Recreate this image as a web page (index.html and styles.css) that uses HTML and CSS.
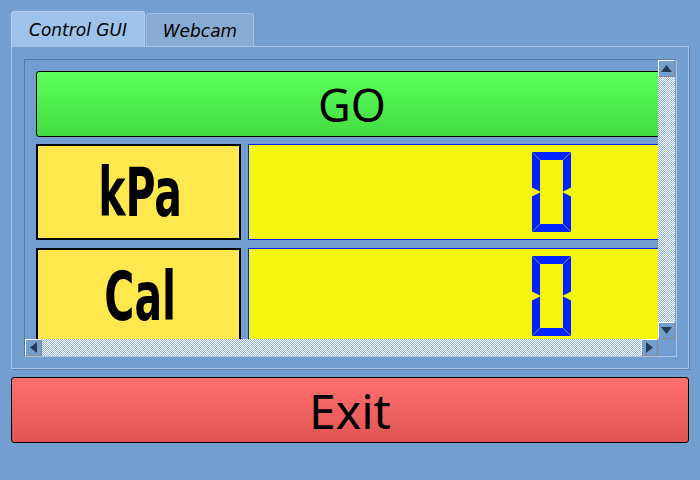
FILE: index.html
```html
<!DOCTYPE html>
<html>
<head>
<meta charset="utf-8">
<link rel="stylesheet" href="styles.css">
</head>
<body>
<div class="app">
  <div class="tabs">
    <div class="tab active">Control GUI</div>
    <div class="tab">Webcam</div>
  </div>
  <div class="pane">
    <div class="scroll">
      <div class="viewport">
        <div class="content">
          <div class="go">GO</div>
          <div class="row">
            <div class="label"><span class="ltext">kPa</span></div>
            <div class="value">
              <svg class="digit" width="39" height="80" viewBox="0 0 39 80">
                <g fill="#0022ff">
                  <polygon points="0,0 39,0 31,8 8,8"/>
                  <polygon points="0,0 8,8 8,39.5 0,35.5"/>
                  <polygon points="39,0 31,8 31,39.5 39,35.5"/>
                  <polygon points="0,44.5 8,40.5 8,72 0,80"/>
                  <polygon points="39,44.5 31,40.5 31,72 39,80"/>
                  <polygon points="0,80 8,72 31,72 39,80"/>
                </g>
                <g stroke="#7d8a6a" stroke-width="1">
                  <line x1="0.5" y1="0.5" x2="8" y2="8"/>
                  <line x1="38.5" y1="0.5" x2="31" y2="8"/>
                  <line x1="0.5" y1="79.5" x2="8" y2="72"/>
                  <line x1="38.5" y1="79.5" x2="31" y2="72"/>
                </g>
              </svg>
            </div>
          </div>
          <div class="row">
            <div class="label"><span class="ltext">Cal</span></div>
            <div class="value">
              <svg class="digit" width="39" height="80" viewBox="0 0 39 80">
                <g fill="#0022ff">
                  <polygon points="0,0 39,0 31,8 8,8"/>
                  <polygon points="0,0 8,8 8,39.5 0,35.5"/>
                  <polygon points="39,0 31,8 31,39.5 39,35.5"/>
                  <polygon points="0,44.5 8,40.5 8,72 0,80"/>
                  <polygon points="39,44.5 31,40.5 31,72 39,80"/>
                  <polygon points="0,80 8,72 31,72 39,80"/>
                </g>
                <g stroke="#7d8a6a" stroke-width="1">
                  <line x1="0.5" y1="0.5" x2="8" y2="8"/>
                  <line x1="38.5" y1="0.5" x2="31" y2="8"/>
                  <line x1="0.5" y1="79.5" x2="8" y2="72"/>
                  <line x1="38.5" y1="79.5" x2="31" y2="72"/>
                </g>
              </svg>
            </div>
          </div>
        </div>
      </div>
      <div class="vbar">
        <div class="sbtn"><svg width="11" height="7" viewBox="0 0 11 7"><polygon points="0,7 11,7 5.5,0" fill="#263a55"/></svg></div>
        <div class="track"></div>
        <div class="sbtn"><svg width="11" height="7" viewBox="0 0 11 7"><polygon points="0,0 11,0 5.5,7" fill="#263a55"/></svg></div>
      </div>
      <div class="hbar">
        <div class="sbtn"><svg width="7" height="11" viewBox="0 0 7 11"><polygon points="7,0 7,11 0,5.5" fill="#263a55"/></svg></div>
        <div class="track"></div>
        <div class="sbtn"><svg width="7" height="11" viewBox="0 0 7 11"><polygon points="0,0 0,11 7,5.5" fill="#263a55"/></svg></div>
      </div>
      <div class="corner"></div>
    </div>
  </div>
  <div class="exit">Exit</div>
</div>
</body>
</html>
```

FILE: styles.css
```css
html, body {
  margin: 0;
  padding: 0;
  background: #729fcf;
}
body {
  width: 700px;
  height: 480px;
  overflow: hidden;
  font-family: "Noto Sans", "DejaVu Sans", sans-serif;
}
.app {
  padding: 11px 11px 0 11px;
  display: flex;
  flex-direction: column;
}
.tabs {
  display: flex;
  align-items: flex-end;
  height: 36px;
  margin-bottom: -1px;
  position: relative;
  z-index: 1;
}
.tab {
  box-sizing: border-box;
  font-family: "DejaVu Sans", sans-serif;
  font-style: italic;
  font-size: 17px;
  color: #000;
  border: 1px solid #8fb0d6;
  border-bottom: none;
  border-radius: 3px 3px 0 0;
  display: flex;
  align-items: center;
  justify-content: center;
}
.tab.active {
  width: 134px;
  height: 36px;
  background: #9dc3ea;
  border-color: #b4d0ef;
  padding-top: 1px;
}
.tab:not(.active) {
  width: 108px;
  height: 33px;
  margin-left: 1px;
  background: #88abd4;
  border-color: #a3c0e2;
  margin-bottom: 1px;
  padding-top: 2px;
}
.pane {
  box-sizing: border-box;
  width: 678px;
  height: 323px;
  border: 1px solid #a9c6e8;
  box-shadow: 1px 1px 0 #5c80aa;
  padding: 12px 11px 11px 12px;
}
.scroll {
  box-sizing: border-box;
  width: 653px;
  height: 298px;
  border: 1px solid #58799f;
  border-right-color: #a9c6e8;
  border-bottom-color: #a9c6e8;
  display: grid;
  grid-template-columns: 633px 18px;
  grid-template-rows: 279px 17px;
}
.viewport {
  overflow: hidden;
  background: #729fcf;
}
.content {
  padding: 11px 0 0 11px;
  width: 700px;
}
.go {
  box-sizing: border-box;
  height: 66px;
  border: 1px solid #000;
  border-radius: 3px;
  background: linear-gradient(#5cff5c, #42dc42);
  font-size: 45px;
  display: flex;
  align-items: center;
  justify-content: center;
  padding-left: 4px;
  margin-bottom: 7px;
  width: 628px;
}
.row {
  display: flex;
  gap: 7px;
  height: 96px;
  margin-bottom: 8px;
}
.label {
  box-sizing: border-box;
  width: 205px;
  height: 96px;
  border: 2px solid #000;
  background: #ffe84d;
  font-family: "DejaVu Sans Condensed", "DejaVu Sans", sans-serif;
  font-weight: bold;
  font-size: 60px;
  display: flex;
  align-items: center;
  justify-content: center;
  padding-left: 3px;
  padding-top: 0;
}
.ltext {
  display: inline-block;
  transform: scale(0.76, 1.12);
}
.value {
  box-sizing: border-box;
  width: 420px;
  height: 96px;
  border: 1px solid #0022ff;
  background: #f5f50d;
  display: flex;
  align-items: center;
  padding-left: 283px;
}
.digit {
  display: block;
}
.vbar, .hbar {
  display: flex;
}
.vbar {
  flex-direction: column;
  width: 17px;
}
.hbar {
  height: 17px;
}
.track {
  flex: 1;
  background: repeating-conic-gradient(#ffffff 0 25%, #8fb3e0 0 50%) 0 0 / 2px 2px;
}
.sbtn {
  box-sizing: border-box;
  width: 17px;
  height: 17px;
  flex: none;
  background: #729fcf;
  border: 1px solid #8a8a8a;
  border-top-color: #ffffff;
  border-left-color: #ffffff;
  display: flex;
  align-items: center;
  justify-content: center;
}
.corner {
  background: #729fcf;
}
.exit {
  box-sizing: border-box;
  margin-top: 8px;
  width: 678px;
  height: 66px;
  border: 1px solid #000;
  border-radius: 3px;
  background: linear-gradient(#ff7070, #e05454);
  font-size: 48px;
  display: flex;
  align-items: center;
  justify-content: center;
}
```
